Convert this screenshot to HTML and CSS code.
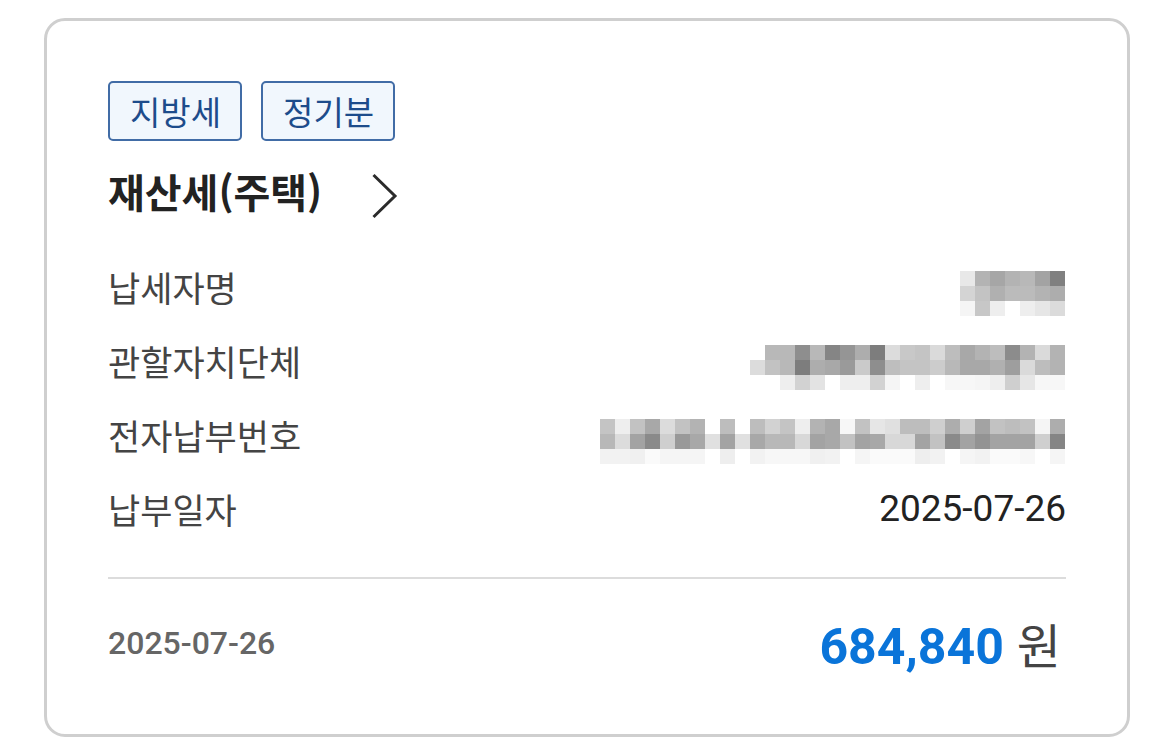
FILE: index.html
```html
<!DOCTYPE html>
<html lang="ko">
<head>
<meta charset="utf-8">
<title>재산세(주택)</title>
<link rel="stylesheet" href="styles.css">
</head>
<body>
<div class="page">
  <div class="card">
    <div class="tags">
      <span class="tag">지방세</span>
      <span class="tag">정기분</span>
    </div>
    <div class="title-row">
      <span class="title">재산세(주택)</span>
      <svg class="chevron" width="27" height="46" viewBox="0 0 27 46" aria-hidden="true">
        <path d="M2.5 2 L24 23 L2.5 44" fill="none" stroke="#2b2b2b" stroke-width="3"/>
      </svg>
    </div>
    <div class="rows">
      <div class="row">
        <span class="label">납세자명</span>
        <div class="mosaic" data-m="name"></div>
      </div>
      <div class="row">
        <span class="label">관할자치단체</span>
        <div class="mosaic" data-m="org"></div>
      </div>
      <div class="row">
        <span class="label">전자납부번호</span>
        <div class="mosaic" data-m="num"></div>
      </div>
      <div class="row">
        <span class="label">납부일자</span>
        <span class="value">2025-07-26</span>
      </div>
    </div>
    <div class="divider"></div>
    <div class="footer">
      <span class="paid-date">2025-07-26</span>
      <span class="amount"><span class="amount-num">684,840</span><span class="won">원</span></span>
    </div>
  </div>
</div>
<script src="script.js"></script>
</body>
</html>
```
FILE: styles.css
```css
html, body {
  margin: 0;
  padding: 0;
  background: #ffffff;
}
body {
  font-family: Roboto, "Noto Sans CJK KR", sans-serif;
}
.page {
  padding: 18px 0 0 44px;
}
.card {
  width: 1086px;
  height: 719px;
  box-sizing: border-box;
  border: 3px solid #cfcfcf;
  border-radius: 21px;
  padding: 60px 61px 0 61px;
  background: #fff;
}
.tags {
  display: flex;
  gap: 19px;
}
.tag {
  height: 60px;
  box-sizing: border-box;
  border: 2px solid #416ca6;
  border-radius: 5px;
  background: #f1f7fd;
  color: #1d4c8b;
  font-family: "Noto Sans CJK KR", sans-serif;
  font-size: 33px;
  line-height: 1;
  padding: 0 19px 0 20px;
  display: flex;
  align-items: center;
}
.title-row {
  display: flex;
  align-items: center;
  height: 50px;
  margin-top: 25px;
}
.title {
  font-family: "Noto Sans CJK KR", sans-serif;
  font-size: 40px;
  font-weight: 700;
  color: #222;
  line-height: 50px;
}
.chevron {
  margin-left: 49px;
  margin-top: 10px;
}
.rows {
  margin-top: 33px;
}
.row {
  height: 74px;
  display: flex;
  justify-content: space-between;
  align-items: center;
}
.label {
  font-family: "Noto Sans CJK KR", sans-serif;
  font-size: 35px;
  color: #444;
}
.value {
  font-size: 37px;
  color: #222;
}
.mosaic {
  display: flex;
  flex-direction: column;
  align-items: flex-end;
  align-self: flex-start;
  margin-top: 22px;
  margin-right: 1px;
}
.mosaic-line {
  display: flex;
}
.cell {
  width: 15px;
  height: 15px;
}
.divider {
  margin-top: 32px;
  height: 2px;
  background: #dcdcdc;
}
.footer {
  height: 128px;
  display: flex;
  justify-content: space-between;
  align-items: center;
}
.paid-date {
  font-size: 32px;
  font-weight: 500;
  color: #666;
}
.amount {
  display: flex;
  align-items: baseline;
  margin-right: 5px;
}
.amount-num {
  font-size: 50px;
  font-weight: 700;
  color: #0a74d9;
}
.won {
  font-family: "Noto Sans CJK KR", sans-serif;
  font-size: 48px;
  color: #444;
  margin-left: 13px;
}
```
FILE: script.js
```js
(function () {
  var data = {
    name: [
      "e8 b3 a6 b3 b8 a3 80",
      "d4 c3 b0 bb bb b3 ad",
      "f5 c7 ee ff ee e6 db"
    ],
    org: [
      "b8 b8 8e b8 85 95 ad 7d dc c8 c4 da bd a8 b3 bd 8c b3 da b3",
      "dc c2 b8 7d ad a8 9a ca 8e be c4 c4 cc b8 a8 a8 b0 9e da bd b3",
      "ee d2 e3 ff ee ee d2 f5 ff ee ff f7 f7 f5 ee cf e6 f7 f7"
    ],
    num: [
      "c4 ee c2 a8 dc c2 b3 ff bd ff bd d2 c4 ee b3 a8 f7 c2 e6 e0 bd bd cf ad cf a3 c2 bd c2 f5 ad",
      "b8 dc a3 8a cf 99 a8 e0 a3 e0 a8 b8 b8 d8 a3 a8 c2 a3 a8 d8 d8 a3 c2 8a a3 93 a3 a3 a3 cf 85",
      "f2 f2 f0 fa f5 f5 f5 ff ee ff f2 f7 f7 f7 f0 f2 ff f5 fa fa fa ee f2 ff f5 f2 fa fa f7 ff f5"
    ]
  };
  var boxes = document.querySelectorAll(".mosaic");
  for (var i = 0; i < boxes.length; i++) {
    var el = boxes[i];
    var lines = data[el.getAttribute("data-m")] || [];
    for (var j = 0; j < lines.length; j++) {
      var line = document.createElement("div");
      line.className = "mosaic-line";
      var cells = lines[j].split(" ");
      for (var k = 0; k < cells.length; k++) {
        var c = document.createElement("span");
        c.className = "cell";
        var g = cells[k];
        c.style.backgroundColor = "#" + g + g + g;
        line.appendChild(c);
      }
      el.appendChild(line);
    }
  }
})();
```
